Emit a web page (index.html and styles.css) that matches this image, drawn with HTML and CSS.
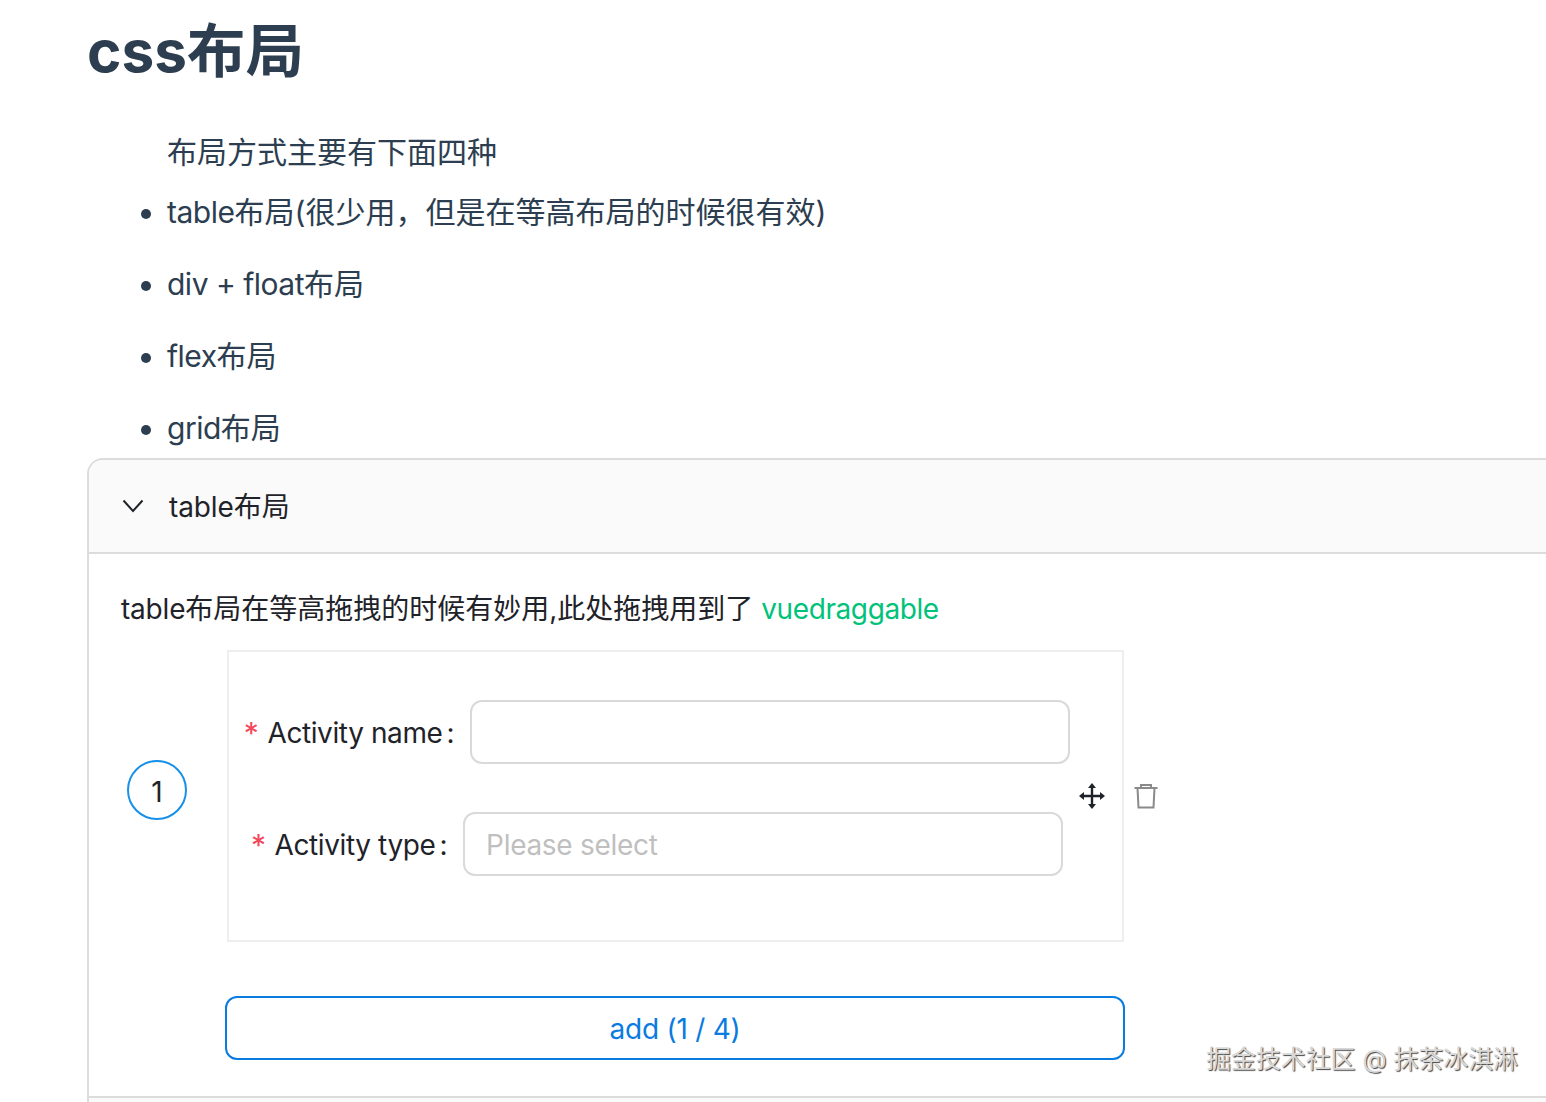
FILE: index.html
```html
<!DOCTYPE html>
<html lang="zh-CN">
<head>
<meta charset="utf-8">
<title>css布局</title>
<link rel="stylesheet" href="styles.css">
</head>
<body>
<main class="page">
  <h1 class="title">css布局</h1>
  <p class="intro">布局方式主要有下面四种</p>
  <ul class="list">
    <li><span class="lat">table</span>布局(很少用，但是在等高布局的时候很有效)</li>
    <li><span class="lat">div + float</span>布局</li>
    <li><span class="lat">flex</span>布局</li>
    <li><span class="lat">grid</span>布局</li>
  </ul>
  <section class="collapse">
    <header class="collapse-head">
      <svg class="chevron" viewBox="0 0 22 14" width="22" height="14"><path d="M1.500 1.500 11 12 20.500 1.500" fill="none" stroke="#1f2329" stroke-width="2"/></svg>
      <span class="head-text">table布局</span>
    </header>
    <div class="collapse-body">
      <p class="desc"><span class="lat-s">table</span>布局在等高拖拽的时候有妙用,此处拖拽用到了 <a class="link">vuedraggable</a></p>
      <div class="row">
        <div class="badge">1</div>
        <div class="card">
          <form class="form">
            <div class="field">
              <label class="label"><span class="star">*</span>Activity name<span class="colon">:</span></label>
              <div class="input"></div>
            </div>
            <div class="field">
              <label class="label"><span class="star">*</span>Activity type<span class="colon">:</span></label>
              <div class="input placeholder">Please select</div>
            </div>
          </form>
          <svg class="move" viewBox="0 0 26 26" width="26" height="26">
            <path d="M13 3v20M3 13h20" stroke="#1f2329" stroke-width="2.400" fill="none"/>
            <path d="M13 0l4 5H9zM13 26l-4-5h8zM0 13l5-4v8zM26 13l-5 4V9z" fill="#1f2329"/>
          </svg>
        </div>
        <svg class="trash" viewBox="0 0 26 26" width="26" height="26">
          <path d="M1.500 5h23M8 5V2h10v3M4.500 5l1 19.500h15l1-19.500" fill="none" stroke="#8a8a8a" stroke-width="2"/>
        </svg>
      </div>
      <button class="add" type="button">add (1 / 4)</button>
    </div>
    <div class="collapse-next"></div>
  </section>
</main>
<div class="watermark">掘金技术社区 @ 抹茶冰淇淋</div>
</body>
</html>
```

FILE: styles.css
```css
html, body {
  margin: 0;
  padding: 0;
  height: 1102px;
  overflow: hidden;
  background: #fff;
}
body {
  font-family: Inter, "Noto Sans CJK SC", sans-serif;
  color: #2c3e50;
  position: relative;
}
.page {
  padding-left: 87px;
  width: 1459px;
  overflow: hidden;
}
.title {
  margin: 0;
  height: 100px;
  font-size: 58.500px;
  line-height: 102px;
  font-weight: 700;
  color: #2c3e50;
}
.intro {
  margin: 28px 0 0 80px;
  font-size: 30px;
  line-height: 48px;
}
.list {
  margin: 12px 0 0;
  padding: 0 0 0 80px;
  font-size: 30px;
  line-height: 48px;
}
.list li + li {
  margin-top: 24px;
}
.lat {
  letter-spacing: -0.5px;
}
.lat-s {
  letter-spacing: -0.2px;
}
.collapse {
  margin: 6px -40px 0 0;
  border: 2px solid #dcdcdc;
  border-bottom: 0;
  border-right: 0;
  border-top-left-radius: 16px;
  overflow: hidden;
}
.collapse-head {
  box-sizing: border-box;
  height: 94px;
  display: flex;
  align-items: center;
  background: #fafafa;
  border-bottom: 2px solid #dcdcdc;
  font-size: 28px;
  color: #1f2329;
  padding-left: 33px;
  gap: 25px;
}
.head-text {
  margin-bottom: 2px;
  letter-spacing: -0.1px;
}
.collapse-body {
  padding: 31px 0 36px 32px;
  color: #1f2329;
  font-size: 28px;
}
.desc {
  margin: 0;
  line-height: 48px;
  height: 46px;
}
.link {
  color: #00c27a;
  letter-spacing: -0.4px;
}
.row {
  display: flex;
  align-items: center;
  margin-top: 19px;
  width: 1040px;
}
.badge {
  width: 60px;
  height: 60px;
  box-sizing: border-box;
  border: 2px solid #1890e8;
  border-radius: 50%;
  display: flex;
  align-items: center;
  justify-content: center;
  margin: 0 0 12px 6px;
  padding-top: 3px;
  font-size: 28px;
}
.card {
  margin-left: 40px;
  width: 897px;
  height: 292px;
  box-sizing: border-box;
  border: 2px solid #eeeeee;
  display: flex;
  align-items: center;
  position: relative;
}
.form {
  flex: 1;
  display: flex;
  flex-direction: column;
  gap: 48px;
  padding-right: 37px;
  align-items: center;
  margin-top: -16px;
}
.field {
  display: flex;
  align-items: center;
}
.label {
  display: flex;
  align-items: center;
  line-height: 40px;
  margin-right: 16px;
  padding-top: 2px;
  letter-spacing: -0.4px;
}
.star {
  color: #f5475b;
  font-size: 30px;
  margin-right: 9px;
}
.colon {
  margin-left: 4px;
}
.input {
  width: 600px;
  height: 64px;
  box-sizing: border-box;
  border: 2px solid #d9d9d9;
  border-radius: 12px;
  background: #fff;
}
.placeholder {
  display: flex;
  align-items: center;
  padding: 2px 0 0 21px;
  color: #bfbfbf;
  letter-spacing: -0.3px;
}
.move {
  position: absolute;
  left: 850px;
  top: 131px;
}
.trash {
  margin-left: 9px;
}
.add {
  display: block;
  margin: 54px 0 0 104px;
  padding-top: 3px;
  width: 900px;
  height: 64px;
  box-sizing: border-box;
  border: 2px solid #0a7be0;
  border-radius: 12px;
  background: #fff;
  color: #0a7be0;
  font-family: inherit;
  font-size: 28px;
  letter-spacing: -0.25px;
}
.collapse-next {
  border-top: 2px solid #dcdcdc;
  height: 20px;
  background: #fafafa;
}
.watermark {
  position: absolute;
  right: 28px;
  top: 1039px;
  font-size: 24.900px;
  line-height: 40px;
  color: #d8d8d8;
  text-shadow: 1px 1px 1px #444;
}
```
